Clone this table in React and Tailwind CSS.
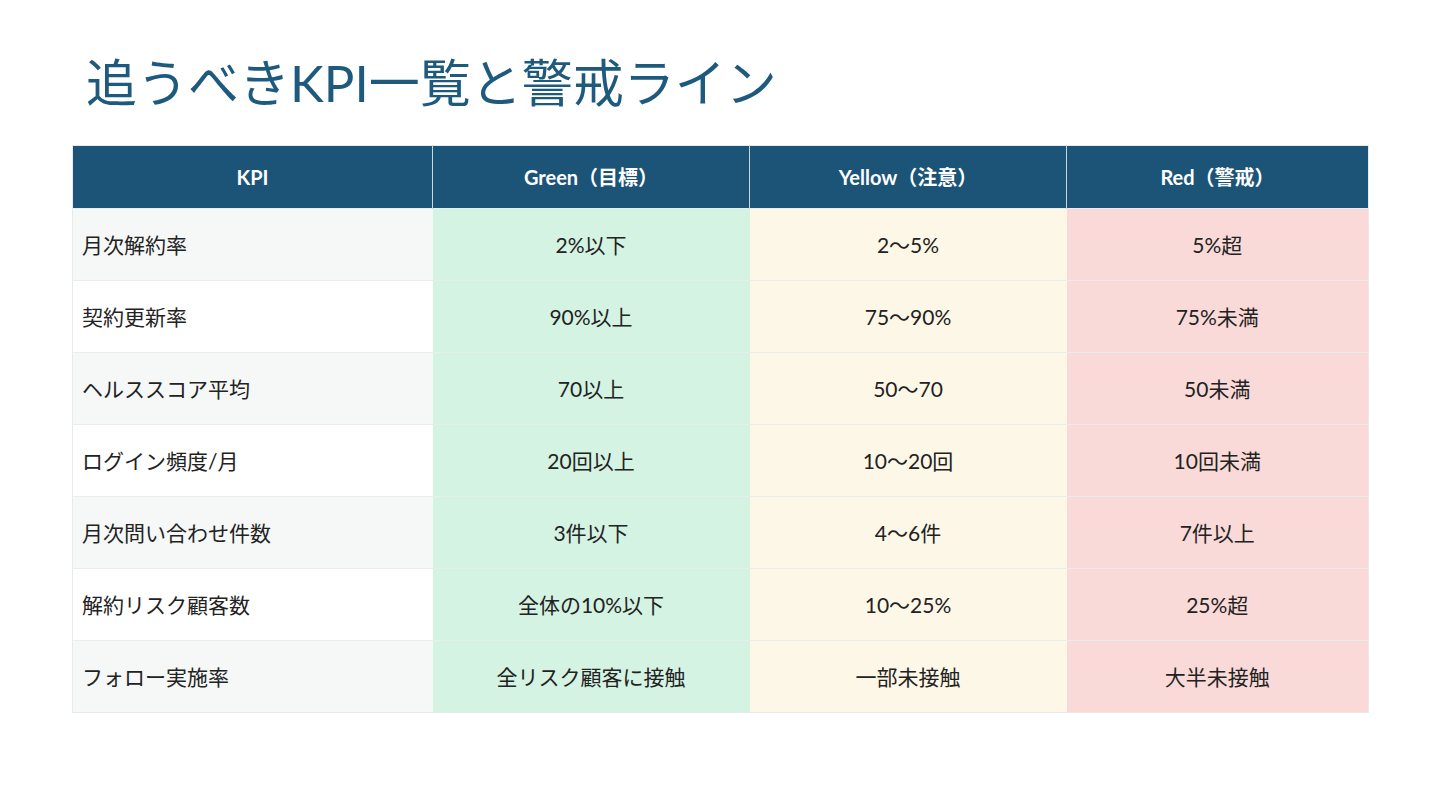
import React from 'react';

const rows = [
    ['月次解約率', '2%以下', '2〜5%', '5%超'],
    ['契約更新率', '90%以上', '75〜90%', '75%未満'],
    ['ヘルススコア平均', '70以上', '50〜70', '50未満'],
    ['ログイン頻度/月', '20回以上', '10〜20回', '10回未満'],
    ['月次問い合わせ件数', '3件以下', '4〜6件', '7件以上'],
    ['解約リスク顧客数', '全体の10%以下', '10〜25%', '25%超'],
    ['フォロー実施率', '全リスク顧客に接触', '一部未接触', '大半未接触'],
];

const App = () => {
    return (
        <div
            className="w-[1440px] h-[810px] bg-white px-[72px]"
            style={{ fontFamily: 'Lato, "Noto Sans CJK JP", sans-serif' }}
        >
            <h1 className="pt-[58px] pl-[14px] text-[51px] leading-[50px] font-normal text-[#1e5a7e]">
                追うべきKPI一覧と警戒ライン
            </h1>

            <table className="mt-[37px] w-[1296px] table-fixed border-collapse border border-[#e6eaeb]">
                <colgroup>
                    <col className="w-[360px]" />
                    <col className="w-[317px]" />
                    <col className="w-[317px]" />
                    <col className="w-[302px]" />
                </colgroup>
                <thead>
                    <tr className="h-[63px] bg-[#1c5477] text-white text-[20px] font-bold">
                        <th className="border-r border-[#c9d6de]">KPI</th>
                        <th className="border-r border-[#c9d6de]">Green（目標）</th>
                        <th className="border-r border-[#c9d6de]">Yellow（注意）</th>
                        <th>Red（警戒）</th>
                    </tr>
                </thead>
                <tbody className="text-[21px] text-[#222]">
                    {rows.map((row, i) => (
                        <tr key={row[0]} className="h-[72px] border-t border-[#e9eded]">
                            <td className={`pl-[9px] ${i % 2 === 0 ? 'bg-[#f5f8f7]' : 'bg-white'}`}>{row[0]}</td>
                            <td className="text-center bg-[#d4f3e2]">{row[1]}</td>
                            <td className="text-center bg-[#fdf7e7]">{row[2]}</td>
                            <td className="text-center bg-[#f9dad8]">{row[3]}</td>
                        </tr>
                    ))}
                </tbody>
            </table>
        </div>
    );
};

export default App;
